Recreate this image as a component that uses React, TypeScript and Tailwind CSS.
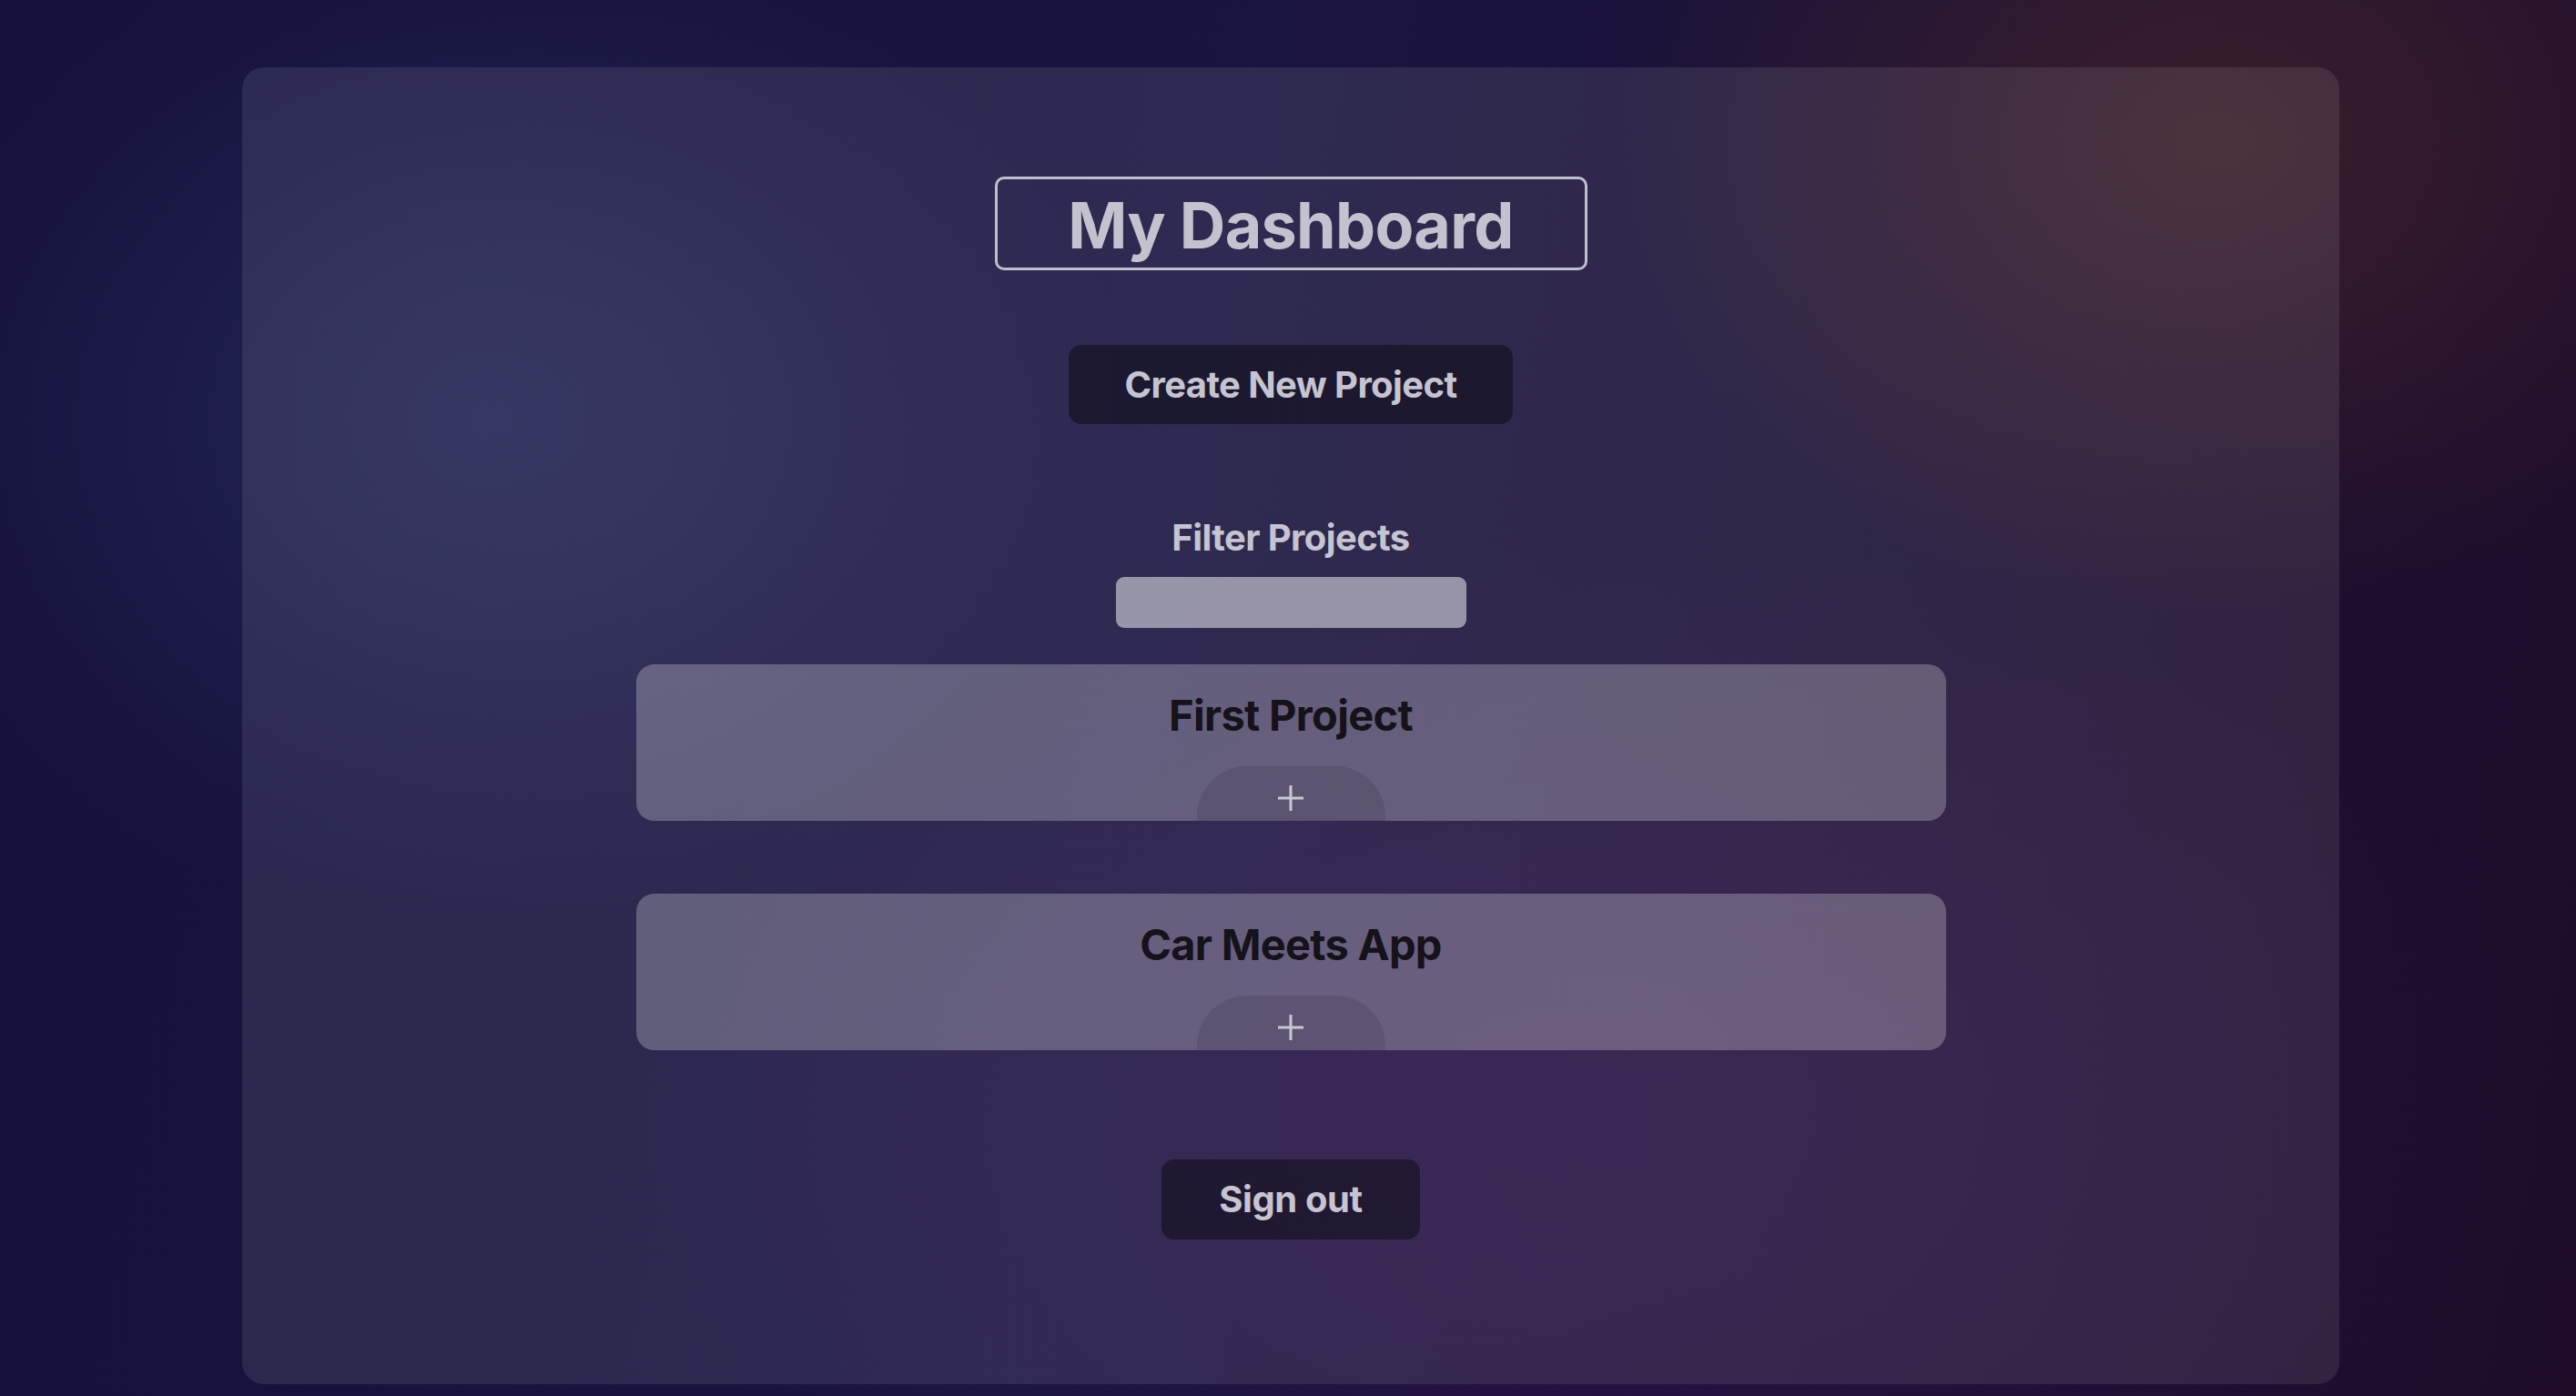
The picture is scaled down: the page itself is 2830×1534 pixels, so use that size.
import React from 'react';

type Project = { id: string; name: string };

const PROJECTS: Project[] = [
  { id: 'p1', name: 'First Project' },
  { id: 'p2', name: 'Car Meets App' },
];

function PlusGlyph() {
  return (
    <svg width="28" height="28" viewBox="0 0 28 28" fill="none" aria-hidden>
      <path d="M14 0v28M0 14h28" stroke="#c9c7d2" strokeWidth="3" />
    </svg>
  );
}

function ProjectCard({ project }: { project: Project }) {
  return (
    <div className="flex h-[172px] w-[1439px] flex-col items-center overflow-hidden rounded-[20px] bg-white/25 pt-[28px]">
      <h2 className="text-[47px] leading-[56px] font-bold tracking-[-0.015em] text-[#151219]">
        {project.name}
      </h2>
      <button className="mt-[28px] flex h-[110px] w-[207px] shrink-0 justify-center rounded-full bg-black/10 pt-[21px]">
        <PlusGlyph />
      </button>
    </div>
  );
}

export default function App() {
  const [filter, setFilter] = React.useState('');
  const visible = PROJECTS.filter((p) => p.name.toLowerCase().includes(filter.toLowerCase()));

  return (
    <div className="flex h-[1534px] w-full justify-center overflow-hidden bg-[image:radial-gradient(ellipse_1000px_800px_at_19%_30%,rgba(48,56,108,0.5),transparent_70%),radial-gradient(ellipse_950px_750px_at_86%_10%,rgba(78,42,38,0.6),transparent_70%),radial-gradient(ellipse_1500px_900px_at_62%_80%,rgba(58,20,84,0.45),transparent_70%),linear-gradient(100deg,#14113b_0%,#1a1540_45%,#1e0c29_100%)] pt-[74px] pl-[6px] font-[Inter,sans-serif]">
      <main className="flex h-[1447px] w-[2304px] flex-col items-center rounded-[24px] bg-white/[0.09] pt-[120px]">
        <div className="flex h-[103px] w-[651px] items-center justify-center rounded-[10px] border-[3px] border-[#bfbecb] pt-[4px]">
          <h1 className="text-[70px] font-bold tracking-[-0.01em] text-[#c3c2ce]">My Dashboard</h1>
        </div>

        <button className="mt-[82px] h-[87px] w-[488px] rounded-[14px] bg-black/40 text-[40px] font-bold tracking-[-0.015em] text-[#c5c4d0]">
          Create New Project
        </button>

        <label
          htmlFor="filter"
          className="mt-[102px] text-[40px] leading-[46px] font-bold tracking-[-0.015em] text-[#c5c4d0]"
        >
          Filter Projects
        </label>
        <input
          id="filter"
          value={filter}
          onChange={(e) => setFilter(e.target.value)}
          className="mt-[20px] h-[56px] w-[385px] rounded-[9px] bg-white/50 px-4 text-[28px] text-[#151219] outline-none"
        />

        <div className="mt-[40px] flex flex-col gap-[80px]">
          {visible.map((p) => (
            <ProjectCard key={p.id} project={p} />
          ))}
        </div>

        <button className="mt-[120px] h-[88px] w-[284px] rounded-[14px] bg-black/40 text-[40px] font-bold tracking-[-0.01em] text-[#c5c4d0]">
          Sign out
        </button>
      </main>
    </div>
  );
}
